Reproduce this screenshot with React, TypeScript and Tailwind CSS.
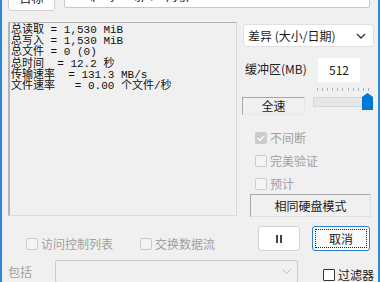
import React from "react";

const ui = { fontFamily: '"Noto Sans CJK SC", "Noto Sans", sans-serif' };
const mono = { fontFamily: '"Liberation Mono", "Noto Sans CJK SC", monospace' };

const lines = [
  "总读取 = 1,530 MiB",
  "总写入 = 1,530 MiB",
  "总文件 = 0 (0)",
  "总时间  = 12.2 秒",
  "传输速率  = 131.3 MB/s",
  "文件速率   = 0.00 个文件/秒",
];

const Check = ({ label, checked, disabled = true }: { label: string; checked?: boolean; disabled?: boolean }) => (
  <div className="flex items-center h-[12px]">
    {checked ? (
      <span className="w-[12px] h-[12px] rounded-[2px] bg-[#cccccc] flex items-center justify-center">
        <svg width="10" height="10" viewBox="0 0 10 10" fill="none">
          <path d="M1.8 5.2 L4 7.3 L8.3 2.6" stroke="#ffffff" strokeWidth="1.4" />
        </svg>
      </span>
    ) : disabled ? (
      <span className="w-[12px] h-[12px] rounded-[2px] border border-[#cccccc] bg-[#f4f4f4]" />
    ) : (
      <span className="w-[12px] h-[12px] rounded-[1px] border border-[#333333] bg-white" />
    )}
    <span className={"ml-[3px] text-[12px] leading-[12px] whitespace-nowrap " + (disabled ? "text-[#a0a0a0]" : "text-[#1a1a1a]")}>
      {label}
    </span>
  </div>
);

export default function App() {
  return (
    <div
      className="w-[380px] h-[282px] overflow-hidden bg-[#f0f0f0] border-l-2 border-r-2 border-[#2b88d8] text-[#1a1a1a]"
      style={ui}
    >
      {/* top row, cut off by the window */}
      <div className="flex items-start -mt-[14px] pl-[6px]">
        <div className="w-[47px] h-[25px] bg-[#fdfdfd] border border-[#d0d0d0] rounded-[3px] flex items-end justify-center text-[12px] leading-[20px] pb-[2px]">
          目标
        </div>
        <div className="ml-[9px] w-[306px] h-[22px] bg-white border border-[#c8c8c8] rounded-[2px] overflow-hidden text-[12px] leading-[14px] pl-[12px] text-[#333]">
          E:\project\jp\copy|jp
        </div>
      </div>

      {/* main area */}
      <div className="flex mt-[11px] pl-[6px]">
        <div
          className="w-[229px] h-[194px] border-l-2 border-t border-[#b4b4b4] border-r border-b border-r-[#dadada] border-b-[#dadada] pl-[1px] pt-[2px] text-[11px] leading-[11.2px] text-[#111]"
          style={mono}
        >
          {lines.map((l, i) => (
            <div key={i} className="whitespace-pre">
              {l}
            </div>
          ))}
        </div>

        <div className="ml-[5px] w-[132px] flex flex-col">
          <div className="mt-[2px] ml-[1px] w-[131px] h-[23px] bg-white border border-[#e0e0e0] rounded-[3px] flex items-center pl-[4px] pr-[7px] text-[12px]">
            <span>差异 (大小/日期)</span>
            <svg className="ml-auto" width="10" height="6" viewBox="0 0 10 6" fill="none">
              <path d="M1 1 L5 5 L9 1" stroke="#333" strokeWidth="1.3" />
            </svg>
          </div>

          <div className="flex items-center mt-[11px] h-[24px]">
            <span className="w-[76px] pl-[3px] mb-[3px] text-[12px] text-[#222]">缓冲区(MB)</span>
            <div className="w-[42px] h-[24px] bg-white flex items-center justify-center text-[12px]">512</div>
          </div>

          <div className="flex items-start">
            <div className="mt-[15px] w-[63px] h-[18px] border-l border-t border-[#a8a8a8] border-r border-b border-r-[#e8e8e8] border-b-[#e8e8e8] flex items-center justify-center text-[12px] leading-[16px]">
              全速
            </div>
            <div className="relative ml-[8px] w-[60px] h-[30px]">
              <div className="mt-[6px] h-[3px] flex justify-between px-[4px]">
                {Array.from({ length: 11 }).map((_, i) => (
                  <span key={i} className="w-px h-[3px] bg-[#b0b0b0]" />
                ))}
              </div>
              <div className="mt-[6px] w-[57px] h-[10px] bg-[#e6e6e6] border border-[#d6d6d6]" />
              <svg className="absolute right-0 top-[11px]" width="11" height="17" viewBox="0 0 11 17">
                <path d="M5.5 0 L11 4 L11 17 L0 17 L0 4 Z" fill="#0078d7" />
              </svg>
            </div>
          </div>

          <div className="flex flex-col gap-[11px] mt-[17px] pl-[13px]">
            <Check label="不间断" checked />
            <Check label="完美验证" />
            <Check label="预计" />
          </div>

          <div className="mt-[4px] ml-[8px] w-[121px] h-[23px] border-l border-t border-[#a8a8a8] border-r border-b border-r-[#e0e0e0] border-b-[#e0e0e0] flex items-center justify-center text-[12px]">
            相同硬盘模式
          </div>
        </div>
      </div>

      {/* bottom buttons */}
      <div className="flex items-start mt-[9px] pl-[24px]">
        <div className="w-[114px] mt-[12px]">
          <Check label="访问控制列表" />
        </div>
        <div className="w-[118px] mt-[12px]">
          <Check label="交换数据流" />
        </div>
        <div className="w-[42px] h-[25px] bg-white border border-[#d4d4d4] rounded-[3px] flex items-center justify-center gap-[2px]">
          <span className="w-[2px] h-[8px] bg-[#444]" />
          <span className="w-[2px] h-[8px] bg-[#444]" />
        </div>
        <div className="ml-[12px] w-[58px] h-[25px] bg-[#fbfbfb] border border-[#2b7fd0] rounded-[3px] p-[2px]">
          <div className="w-full h-full border border-dotted border-[#222] flex items-center justify-center text-[12px] leading-[12px]">
            取消
          </div>
        </div>
      </div>

      {/* include row */}
      <div className="flex items-start mt-[9px] pl-[6px]">
        <span className="w-[47px] text-[12px] leading-[23px] text-[#a0a0a0]">包括</span>
        <div className="w-[243px] h-[23px] bg-[#f0f0f0] border border-[#cccccc] rounded-[2px] flex items-center justify-end pr-[6px]">
          <svg width="9" height="5" viewBox="0 0 9 5" fill="none">
            <path d="M0.5 0.5 L4.5 4.5 L8.5 0.5" stroke="#bbbbbb" strokeWidth="1" />
          </svg>
        </div>
        <div className="ml-[25px] mt-[9px]">
          <Check label="过滤器" disabled={false} />
        </div>
      </div>
    </div>
  );
}
